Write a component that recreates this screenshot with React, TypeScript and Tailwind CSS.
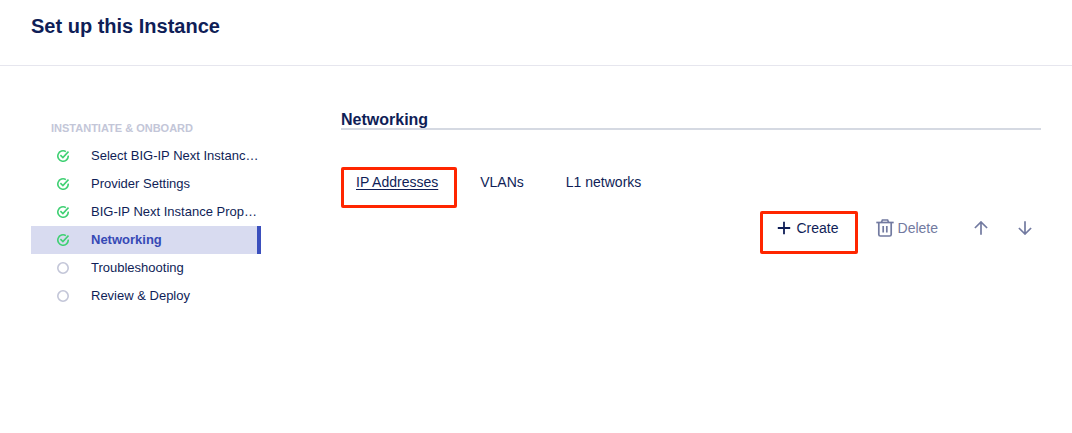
import React from 'react';

type Step = { label: string; state: 'done' | 'todo'; current?: boolean };

const steps: Step[] = [
  { label: 'Select BIG-IP Next Instanc…', state: 'done' },
  { label: 'Provider Settings', state: 'done' },
  { label: 'BIG-IP Next Instance Prop…', state: 'done' },
  { label: 'Networking', state: 'done', current: true },
  { label: 'Troubleshooting', state: 'todo' },
  { label: 'Review & Deploy', state: 'todo' },
];

const tabs = [
  { label: 'IP Addresses', current: true },
  { label: 'VLANs', current: false },
  { label: 'L1 networks', current: false },
];

function StepIcon({ state }: { state: Step['state'] }) {
  if (state === 'todo') {
    return (
      <svg width="12" height="12" viewBox="0 0 12 12" fill="none" aria-hidden="true">
        <circle cx="6" cy="6" r="5.2" stroke="#c3c6d8" strokeWidth="1.6" />
      </svg>
    );
  }
  return (
    <svg width="12" height="12" viewBox="0 0 12 12" fill="none" stroke="#3fd073" strokeWidth="1.6" aria-hidden="true">
      <path d="M8.9 1.7A5.2 5.2 0 1 0 11.2 5.6" />
      <path d="M3.4 5.1L5.9 7.5L11.5 1.6" />
    </svg>
  );
}

function PlusIcon() {
  return (
    <svg width="14" height="14" viewBox="0 0 14 14" fill="none" stroke="currentColor" strokeWidth="1.8" aria-hidden="true">
      <path d="M7 0.8V13.2M0.8 7H13.2" />
    </svg>
  );
}

function TrashIcon() {
  return (
    <svg width="18" height="18" viewBox="0 0 18 18" fill="none" stroke="currentColor" strokeWidth="1.7" aria-hidden="true">
      <path d="M0.3 3.5H17.7" />
      <path d="M5.5 3.2L6.4 1H11.6L12.5 3.2" />
      <path d="M2.8 3.5V15.4Q2.8 17 4.4 17H13.6Q15.2 17 15.2 15.4V3.5" />
      <path d="M7.2 7V13.5M10.8 7V13.5" />
    </svg>
  );
}

function ArrowIcon({ down }: { down?: boolean }) {
  return (
    <svg width="14" height="14" viewBox="0 0 14 14" fill="none" stroke="currentColor" strokeWidth="1.7" aria-hidden="true">
      {down ? <path d="M7 0.3V13M0.9 7L7 13L13.1 7" /> : <path d="M7 13.7V1M0.9 7L7 1L13.1 7" />}
    </svg>
  );
}

export default function App() {
  return (
    <div className="min-h-screen bg-white font-['Liberation_Sans',Arial,sans-serif] text-[#0f1e57]">
      <header className="border-b border-[#e6e6ee] px-[31px] pt-3 pb-[25px]">
        <h1 className="text-[20px] leading-7 font-bold">Set up this Instance</h1>
      </header>

      <div className="flex gap-20 px-[31px]">
        <nav aria-label="Instantiate and onboard" className="w-[230px] shrink-0 pt-[54px]">
          <h2 className="pb-[6px] pl-5 text-[11px] leading-4 font-bold whitespace-nowrap text-[#c3c6d8]">
            INSTANTIATE &amp; ONBOARD
          </h2>
          <ul>
            {steps.map((step) => (
              <li key={step.label}>
                <a
                  href="#"
                  aria-current={step.current ? 'step' : undefined}
                  className={
                    step.current
                      ? 'flex h-7 items-center gap-[22px] border-r-4 border-[#3b4fbd] bg-[#d8dbf0] pl-[26px] text-[13px] font-bold whitespace-nowrap text-[#3649b5]'
                      : 'flex h-7 items-center gap-[22px] pl-[26px] text-[13px] whitespace-nowrap'
                  }
                >
                  <StepIcon state={step.state} />
                  {step.label}
                </a>
              </li>
            ))}
          </ul>
        </nav>

        <main className="min-w-0 flex-1 pt-[46px]">
          <h2 className="border-b-2 border-[#d5d9e2] text-[16px] leading-4 font-bold">Networking</h2>

          <nav aria-label="Networking sections" className="mt-[37px] flex gap-2">
            {tabs.map((tab) => (
              <a
                key={tab.label}
                href="#"
                aria-current={tab.current ? 'page' : undefined}
                className={
                  tab.current
                    ? 'rounded-xs border-3 border-[#ff2600] pt-[2px] pr-4 pb-[13px] pl-3 text-[14px] leading-5 underline underline-offset-2'
                    : 'border-3 border-transparent pt-[2px] pr-4 pb-[13px] pl-3 text-[14px] leading-5'
                }
              >
                {tab.label}
              </a>
            ))}
          </nav>

          <div className="mt-[3px] flex justify-end gap-3 text-[14px] leading-5">
            <button
              type="button"
              className="flex items-center gap-[6px] rounded-xs border-3 border-[#ff2600] pt-1 pr-4 pb-[13px] pl-[14px]"
            >
              <PlusIcon />
              Create
            </button>
            <button
              type="button"
              className="flex items-center gap-1 border-3 border-transparent pt-1 pr-3 pb-[13px] pl-[3px] text-[#727aa0]"
            >
              <TrashIcon />
              Delete
            </button>
            <button
              type="button"
              aria-label="Move up"
              className="flex w-8 items-center justify-center border-3 border-transparent pt-1 pb-[13px] text-[#727aa0]"
            >
              <ArrowIcon />
            </button>
            <button
              type="button"
              aria-label="Move down"
              className="flex w-8 items-center justify-center border-3 border-transparent pt-1 pb-[13px] text-[#727aa0]"
            >
              <ArrowIcon down />
            </button>
          </div>
        </main>
      </div>
    </div>
  );
}
